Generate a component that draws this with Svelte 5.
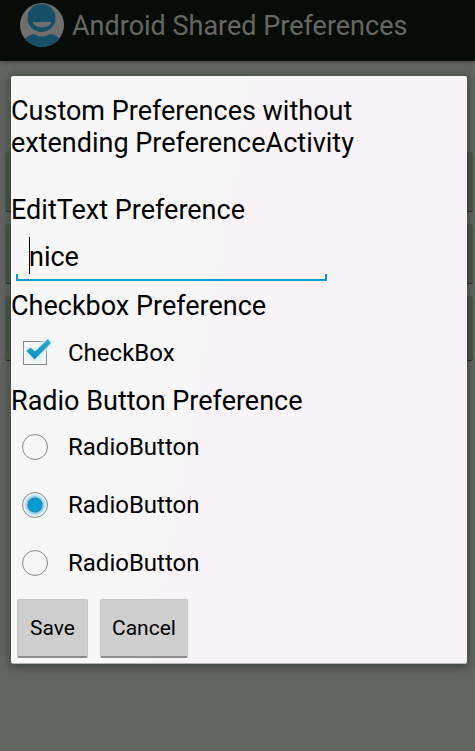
<script>
  let name = $state('nice');
  let checked = $state(true);
  let choice = $state(2);
  const radios = [1, 2, 3];
</script>

<div class="screen">
  <header class="bar">
    <svg class="logo" viewBox="0 0 44 44" aria-hidden="true">
      <defs>
        <clipPath id="disc"><circle cx="22" cy="22" r="22" /></clipPath>
      </defs>
      <g clip-path="url(#disc)">
        <rect width="44" height="44" fill="#6f706c" />
        <path d="M3 38 Q9 31 14 31 Q22 36 30 31 Q36 31 41 38 V44 H3Z" fill="#164f68" />
        <circle cx="21.500" cy="15" r="14" fill="#164f68" />
        <path d="M12.500 19 H31.500 A9.800 7 0 0 1 12.500 19Z" fill="#6f706c" />
      </g>
    </svg>
    <h1>Android Shared Preferences</h1>
  </header>

  <main class="behind">
    <div class="plate"></div>
    <div class="plate"></div>
    <div class="plate tall"></div>
  </main>

  <form class="dialog" onsubmit={(e) => e.preventDefault()}>
    <h2 class="intro">Custom Preferences without<br />extending PreferenceActivity</h2>

    <label class="heading" for="name">EditText Preference</label>
    <div class="field">
      <input id="name" type="text" bind:value={name} />
      <span class="caret"></span>
    </div>

    <h2 class="heading">Checkbox Preference</h2>
    <label class="option check">
      <span class="mark">
        <input type="checkbox" bind:checked />
        {#if checked}
          <svg class="tick" viewBox="0 0 34 34" aria-hidden="true">
            <defs>
              <linearGradient id="blue" x1="0" y1="0" x2="0" y2="1">
                <stop offset="0" stop-color="#35a9d3" />
                <stop offset="1" stop-color="#078fc2" />
              </linearGradient>
            </defs>
            <path class="glow" d="M9 17 L15 22 L27 9" />
            <path d="M5.500 17 L9.500 13.500 L14 17.500 L27 5 L30 9 L13.500 25.500Z" fill="url(#blue)" />
          </svg>
        {/if}
      </span>
      <span>CheckBox</span>
    </label>

    <fieldset>
      <legend class="heading">Radio Button Preference</legend>
      {#each radios as value}
        <label class="option">
          <span class="mark"><input type="radio" name="choice" {value} bind:group={choice} /></span>
          <span>RadioButton</span>
        </label>
      {/each}
    </fieldset>

    <div class="actions">
      <button type="submit">Save</button>
      <button type="button">Cancel</button>
    </div>
  </form>
</div>

<style>
  :global(body) {
    margin: 0;
    background: #636562;
  }

  .screen {
    position: relative;
    min-height: 100vh;
    overflow: hidden;
    background: #636562;
    color: #000;
    font-family: Roboto, 'Noto Sans', sans-serif;
  }

  .bar {
    display: flex;
    align-items: flex-start;
    gap: 8px;
    box-sizing: border-box;
    height: 61px;
    padding: 3px 20px 0;
    background: #080c08;
    box-shadow: 0 1px 4px #444;
  }

  .logo {
    flex: none;
    width: 44px;
    height: 44px;
  }

  h1 {
    margin: 0;
    color: #666763;
    font-size: 27px;
    font-weight: 400;
    line-height: 46px;
    white-space: nowrap;
  }

  .behind {
    display: flex;
    flex-direction: column;
    gap: 12px;
    padding: 91px 2px 0 5px;
  }

  .plate {
    box-sizing: border-box;
    height: 60px;
    border-bottom: 1px solid #1c221c;
    border-radius: 3px;
    background: #4d544c;
  }

  .plate.tall {
    height: 65px;
  }

  .dialog {
    position: absolute;
    top: 76px;
    left: 11px;
    right: 8px;
    box-sizing: border-box;
    padding: 19px 0 5px;
    border-bottom: 1px solid #b5b5b5;
    border-radius: 2px;
    background: linear-gradient(100deg, #f7f7f7 41%, #f7f3f7 45%);
    box-shadow: 0 1px 7px 1px rgba(38, 54, 40, 0.5), 0 2px 8px 5px rgba(60, 78, 58, 0.25);
  }

  .intro,
  .heading {
    display: block;
    margin: 0;
    padding: 0;
    font-size: 27px;
    font-weight: 400;
    line-height: 32px;
  }

  .intro {
    margin-bottom: 35px;
  }

  .field {
    position: relative;
    height: 64px;
    padding-left: 5px;
  }

  .field input {
    display: block;
    box-sizing: border-box;
    width: 69%;
    height: 55px;
    padding: 9px 13px 0;
    border: 0;
    border-bottom: 2px solid #089bd0;
    border-radius: 0;
    outline: 0;
    background:
      linear-gradient(#089bd0, #089bd0) left bottom / 2px 5px no-repeat,
      linear-gradient(#089bd0, #089bd0) right bottom / 2px 5px no-repeat;
    color: #000;
    font: 27px Roboto, 'Noto Sans', sans-serif;
    caret-color: transparent;
  }

  .caret {
    position: absolute;
    top: 11px;
    left: 18px;
    width: 1px;
    height: 37px;
    background: #000;
  }

  .option {
    display: flex;
    align-items: center;
    gap: 20px;
    height: 58px;
    padding-left: 11px;
    font-size: 24px;
  }

  .check {
    height: 62px;
  }

  .mark {
    position: relative;
    display: grid;
    place-items: center;
    width: 26px;
    height: 26px;
  }

  .mark input {
    appearance: none;
    box-sizing: border-box;
    width: 26px;
    height: 26px;
    margin: 0;
    border: 1px solid #888;
    border-radius: 50%;
  }

  .mark input[type='checkbox'] {
    width: 24px;
    height: 24px;
    border-radius: 0;
  }

  .mark input[type='radio']:checked {
    background: radial-gradient(circle, #069bd1 6px, #2b86a8 7px, #8fd0e8 8px, #e3f2f8 11px, #f7f7f7 12px);
  }

  .tick {
    position: absolute;
    top: -6px;
    left: -1px;
    width: 34px;
    height: 34px;
    pointer-events: none;
  }

  .glow {
    fill: none;
    stroke: #d5eef8;
    stroke-width: 9px;
    stroke-linecap: round;
    filter: blur(2px);
  }

  fieldset {
    min-width: 0;
    margin: 0;
    padding: 1px 0 0;
    border: 0;
  }

  legend.heading {
    padding-top: 1px;
  }

  .actions {
    display: flex;
    gap: 12px;
    padding: 7px 6px 0;
  }

  button {
    min-width: 71px;
    height: 59px;
    padding: 0 11px;
    border: 1px solid #c4c4c4;
    border-bottom: 2px solid #8c8c8c;
    border-radius: 2px;
    background: #cfcfcf;
    color: #000;
    font: 21px Roboto, 'Noto Sans', sans-serif;
  }
</style>
